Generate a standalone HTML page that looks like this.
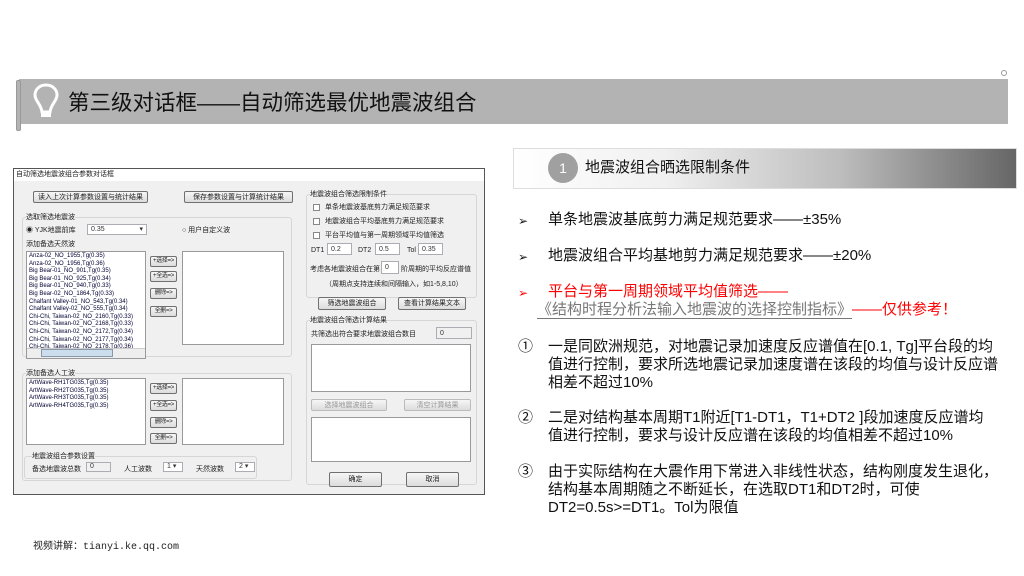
<!DOCTYPE html>
<html><head><meta charset="utf-8"><style>
*{margin:0;padding:0;box-sizing:border-box}
body{width:1024px;height:576px;background:#fff;position:relative;overflow:hidden;font-family:"Liberation Sans","Noto Sans CJK SC",sans-serif}
.a{position:absolute}
.t{position:absolute;font-size:15px;color:#111;white-space:nowrap;line-height:18px}
.d{font-size:7px;color:#222;white-space:nowrap;position:absolute;line-height:9px}
.btn{position:absolute;border:1px solid #707070;background:linear-gradient(#f6f6f6,#dcdcdc);border-radius:2px;font-size:7px;text-align:center;line-height:12px;color:#222;white-space:nowrap;overflow:hidden}
.sb{font-size:6px;letter-spacing:-0.3px}
.box{position:absolute;background:#fff;border:1px solid #999}
.grp{position:absolute;border:1px solid #d6d6d6;border-radius:3px}
.inp{position:absolute;background:#fff;border:1px solid #abadb3;font-size:7px;line-height:12px;padding-left:3px;color:#333}
.cb{display:inline-block;width:7px;height:7px;border:1px solid #888;background:#fff;margin-right:5px;vertical-align:middle}
</style></head><body>
<!-- header -->
<div class="a" style="left:19px;top:79px;width:989px;height:45px;background:#b3b3b3"></div>
<div class="a" style="left:16px;top:80px;width:5px;height:51px;background:#b3b3b3;border-radius:2px;border:1px solid #999"></div>
<div class="a" style="left:1001px;top:70px;width:6px;height:6px;border:1px solid #999;border-radius:50%"></div>
<svg class="a" style="left:32px;top:82px" width="28" height="40" viewBox="0 0 28 40"><path d="M14 3C7 3 3 8 3 13c0 6 6 9 7 17h8c1-8 7-11 7-17C25 8 21 3 14 3z" fill="none" stroke="#fff" stroke-width="3"/><rect x="9" y="31" width="10" height="4" fill="#fff"/></svg>
<div class="t" style="left:68px;top:90px;font-size:21.5px;line-height:26px;color:#111">第三级对话框——自动筛选最优地震波组合</div>

<!-- dialog -->
<div class="a" style="left:13px;top:168px;width:472px;height:327px;background:#f0f0f0;border:1px solid #555"></div>
<div class="a" style="left:14px;top:169px;width:470px;height:12px;background:#fff"></div>
<div class="d" style="left:16px;top:170px">自动筛选地震波组合参数对话框</div>
<div class="btn" style="left:33px;top:191px;width:115px;height:12px">读入上次计算参数设置与统计结果</div>
<div class="btn" style="left:184px;top:191px;width:109px;height:12px">保存参数设置与计算统计结果</div>
<div class="grp" style="left:22px;top:217px;width:270px;height:140px"></div>
<div class="d" style="left:26px;top:213px;background:#f0f0f0">选取筛选地震波</div>
<div class="d" style="left:26px;top:226px">◉ YJK地震前库</div>
<div class="inp" style="left:87px;top:224px;width:60px;height:11px;line-height:9px">0.35 <span style="float:right;padding-right:3px">▾</span></div>
<div class="d" style="left:182px;top:226px">○ 用户自定义波</div>
<div class="d" style="left:26px;top:240px">添加备选天然波</div>
<div class="box" style="left:26px;top:251px;width:120px;height:108px;overflow:hidden">
<div class="d" style="left:2px;top:1px;color:#003;line-height:7.6px;font-size:6px">Anza-02_NO_1955,Tg(0.35)<br>Anza-02_NO_1956,Tg(0.36)<br>Big Bear-01_NO_901,Tg(0.35)<br>Big Bear-01_NO_925,Tg(0.34)<br>Big Bear-01_NO_940,Tg(0.33)<br>Big Bear-02_NO_1864,Tg(0.33)<br>Chalfant Valley-01_NO_543,Tg(0.34)<br>Chalfant Valley-02_NO_555,Tg(0.34)<br>Chi-Chi, Taiwan-02_NO_2160,Tg(0.33)<br>Chi-Chi, Taiwan-02_NO_2168,Tg(0.33)<br>Chi-Chi, Taiwan-02_NO_2172,Tg(0.34)<br>Chi-Chi, Taiwan-02_NO_2177,Tg(0.34)<br>Chi-Chi, Taiwan-02_NO_2178,Tg(0.36)</div>
<div class="a" style="left:0;top:96px;width:118px;height:10px;background:#eee;border-top:1px solid #ccc"></div>
<div class="a" style="left:14px;top:97px;width:72px;height:8px;background:#cde;border:1px solid #89a"></div>
</div>
<div class="btn sb" style="left:150px;top:256px;width:27px;height:11px;line-height:9px">+选择=></div>
<div class="btn sb" style="left:150px;top:271px;width:27px;height:11px;line-height:9px">+全选=></div>
<div class="btn sb" style="left:150px;top:288px;width:27px;height:11px;line-height:9px">删除=></div>
<div class="btn sb" style="left:150px;top:306px;width:27px;height:11px;line-height:9px">全删=></div>
<div class="box" style="left:182px;top:251px;width:102px;height:94px"></div>
<div class="grp" style="left:22px;top:373px;width:270px;height:108px"></div>
<div class="d" style="left:26px;top:369px;background:#f0f0f0">添加备选人工波</div>
<div class="box" style="left:26px;top:378px;width:120px;height:67px"><div class="d" style="left:2px;top:1px;line-height:7.6px;font-size:6px;color:#003">ArtWave-RH1TG035,Tg(0.35)<br>ArtWave-RH2TG035,Tg(0.35)<br>ArtWave-RH3TG035,Tg(0.35)<br>ArtWave-RH4TG035,Tg(0.35)</div></div>
<div class="btn sb" style="left:150px;top:383px;width:27px;height:11px;line-height:9px">+选择=></div>
<div class="btn sb" style="left:150px;top:400px;width:27px;height:11px;line-height:9px">+全选=></div>
<div class="btn sb" style="left:150px;top:417px;width:27px;height:11px;line-height:9px">删除=></div>
<div class="btn sb" style="left:150px;top:433px;width:27px;height:11px;line-height:9px">全删=></div>
<div class="box" style="left:182px;top:378px;width:102px;height:67px"></div>
<div class="grp" style="left:24px;top:456px;width:233px;height:23px"></div>
<div class="d" style="left:32px;top:452px;background:#f0f0f0">地震波组合参数设置</div>
<div class="d" style="left:32px;top:465px">备选地震波总数</div>
<div class="inp" style="left:86px;top:462px;width:25px;height:10px;line-height:8px;background:#f0f0f0">0</div>
<div class="d" style="left:124px;top:465px">人工波数</div>
<div class="inp" style="left:163px;top:462px;width:20px;height:10px;line-height:8px">1 ▾</div>
<div class="d" style="left:196px;top:465px">天然波数</div>
<div class="inp" style="left:235px;top:462px;width:20px;height:10px;line-height:8px">2 ▾</div>

<div class="grp" style="left:306px;top:194px;width:171px;height:104px"></div>
<div class="d" style="left:310px;top:190px;background:#f0f0f0">地震波组合筛选限制条件</div>
<div class="d" style="left:313px;top:203px"><span class="cb"></span>单条地震波基底剪力满足规范要求</div>
<div class="d" style="left:313px;top:217px"><span class="cb"></span>地震波组合平均基底剪力满足规范要求</div>
<div class="d" style="left:313px;top:231px"><span class="cb"></span>平台平均值与第一周期领域平均值筛选</div>
<div class="d" style="left:311px;top:246px">DT1</div><div class="inp" style="left:327px;top:243px;width:25px;height:12px">0.2</div>
<div class="d" style="left:358px;top:246px">DT2</div><div class="inp" style="left:375px;top:243px;width:25px;height:12px">0.5</div>
<div class="d" style="left:407px;top:246px">Tol</div><div class="inp" style="left:418px;top:243px;width:25px;height:12px">0.35</div>
<div class="d" style="left:310px;top:265px">考虑各地震波组合在第</div><div class="inp" style="left:381px;top:261px;width:18px;height:13px">0</div><div class="d" style="left:401px;top:265px">阶周期的平均反应谱值</div>
<div class="d" style="left:325px;top:280px">（周期点支持连续和间隔输入，如1-5,8,10）</div>
<div class="btn" style="left:318px;top:297px;width:68px;height:13px">筛选地震波组合</div>
<div class="btn" style="left:398px;top:297px;width:68px;height:13px">查看计算结果文本</div>
<div class="grp" style="left:306px;top:320px;width:171px;height:165px"></div>
<div class="d" style="left:310px;top:316px;background:#f0f0f0">地震波组合筛选计算结果</div>
<div class="d" style="left:311px;top:330px">共筛选出符合要求地震波组合数目</div>
<div class="inp" style="left:436px;top:327px;width:36px;height:12px;background:#f0f0f0">0</div>
<div class="box" style="left:311px;top:344px;width:160px;height:48px"></div>
<div class="btn" style="left:311px;top:399px;width:76px;height:12px;color:#999;border-color:#bbb">选择地震波组合</div>
<div class="btn" style="left:404px;top:399px;width:67px;height:12px;color:#999;border-color:#bbb">清空计算结果</div>
<div class="box" style="left:311px;top:417px;width:160px;height:45px"></div>
<div class="btn" style="left:329px;top:472px;width:53px;height:15px;line-height:13px">确定</div>
<div class="btn" style="left:406px;top:472px;width:53px;height:15px;line-height:13px">取消</div>

<div class="a" style="left:33px;top:537px;font-size:10px;font-family:'Liberation Mono','Noto Sans CJK SC',monospace;color:#222">视频讲解：tianyi.ke.qq.com</div>

<!-- right -->
<div class="a" style="left:513px;top:148px;width:504px;height:41px;background:linear-gradient(90deg,#fff 0%,#f0f0f0 30%,#bdbdbd 65%,#666 100%);border:1px solid #ddd"></div>
<div class="a" style="left:548px;top:153px;width:30px;height:30px;border-radius:50%;background:#a0a0a0;color:#fff;font-size:14px;text-align:center;line-height:30px">1</div>
<div class="t" style="left:585px;top:159px">地震波组合晒选限制条件</div>
<div class="t" style="left:518px;top:212px;font-size:12px">➢</div>
<div class="t" style="left:548px;top:211px">单条地震波基底剪力满足规范要求——±35%</div>
<div class="t" style="left:518px;top:248px;font-size:12px">➢</div>
<div class="t" style="left:548px;top:247px">地震波组合平均基地剪力满足规范要求——±20%</div>
<div class="t" style="left:518px;top:284px;font-size:12px;color:#f00">➢</div>
<div class="t" style="left:548px;top:283px;color:#f00">平台与第一周期领域平均值筛选——</div>
<div class="t" style="left:537px;top:301px"><span style="color:#777;border-bottom:1px solid #777;display:inline-block;line-height:17px">《结构时程分析法输入地震波的选择控制指标》</span><span style="color:#f00">——仅供参考！</span></div>
<div class="t" style="left:518px;top:338px">①</div>
<div class="t" style="left:548px;top:338px">一是同欧洲规范，对地震记录加速度反应谱值在[0.1, Tg]平台段的均<br>值进行控制，要求所选地震记录加速度谱在该段的均值与设计反应谱<br>相差不超过10%</div>
<div class="t" style="left:518px;top:409px">②</div>
<div class="t" style="left:548px;top:409px">二是对结构基本周期T1附近[T1-DT1，T1+DT2 ]段加速度反应谱均<br>值进行控制，要求与设计反应谱在该段的均值相差不超过10%</div>
<div class="t" style="left:518px;top:463px">③</div>
<div class="t" style="left:548px;top:463px">由于实际结构在大震作用下常进入非线性状态，结构刚度发生退化，<br>结构基本周期随之不断延长，在选取DT1和DT2时，可使<br>DT2=0.5s>=DT1。Tol为限值</div>
</body></html>
